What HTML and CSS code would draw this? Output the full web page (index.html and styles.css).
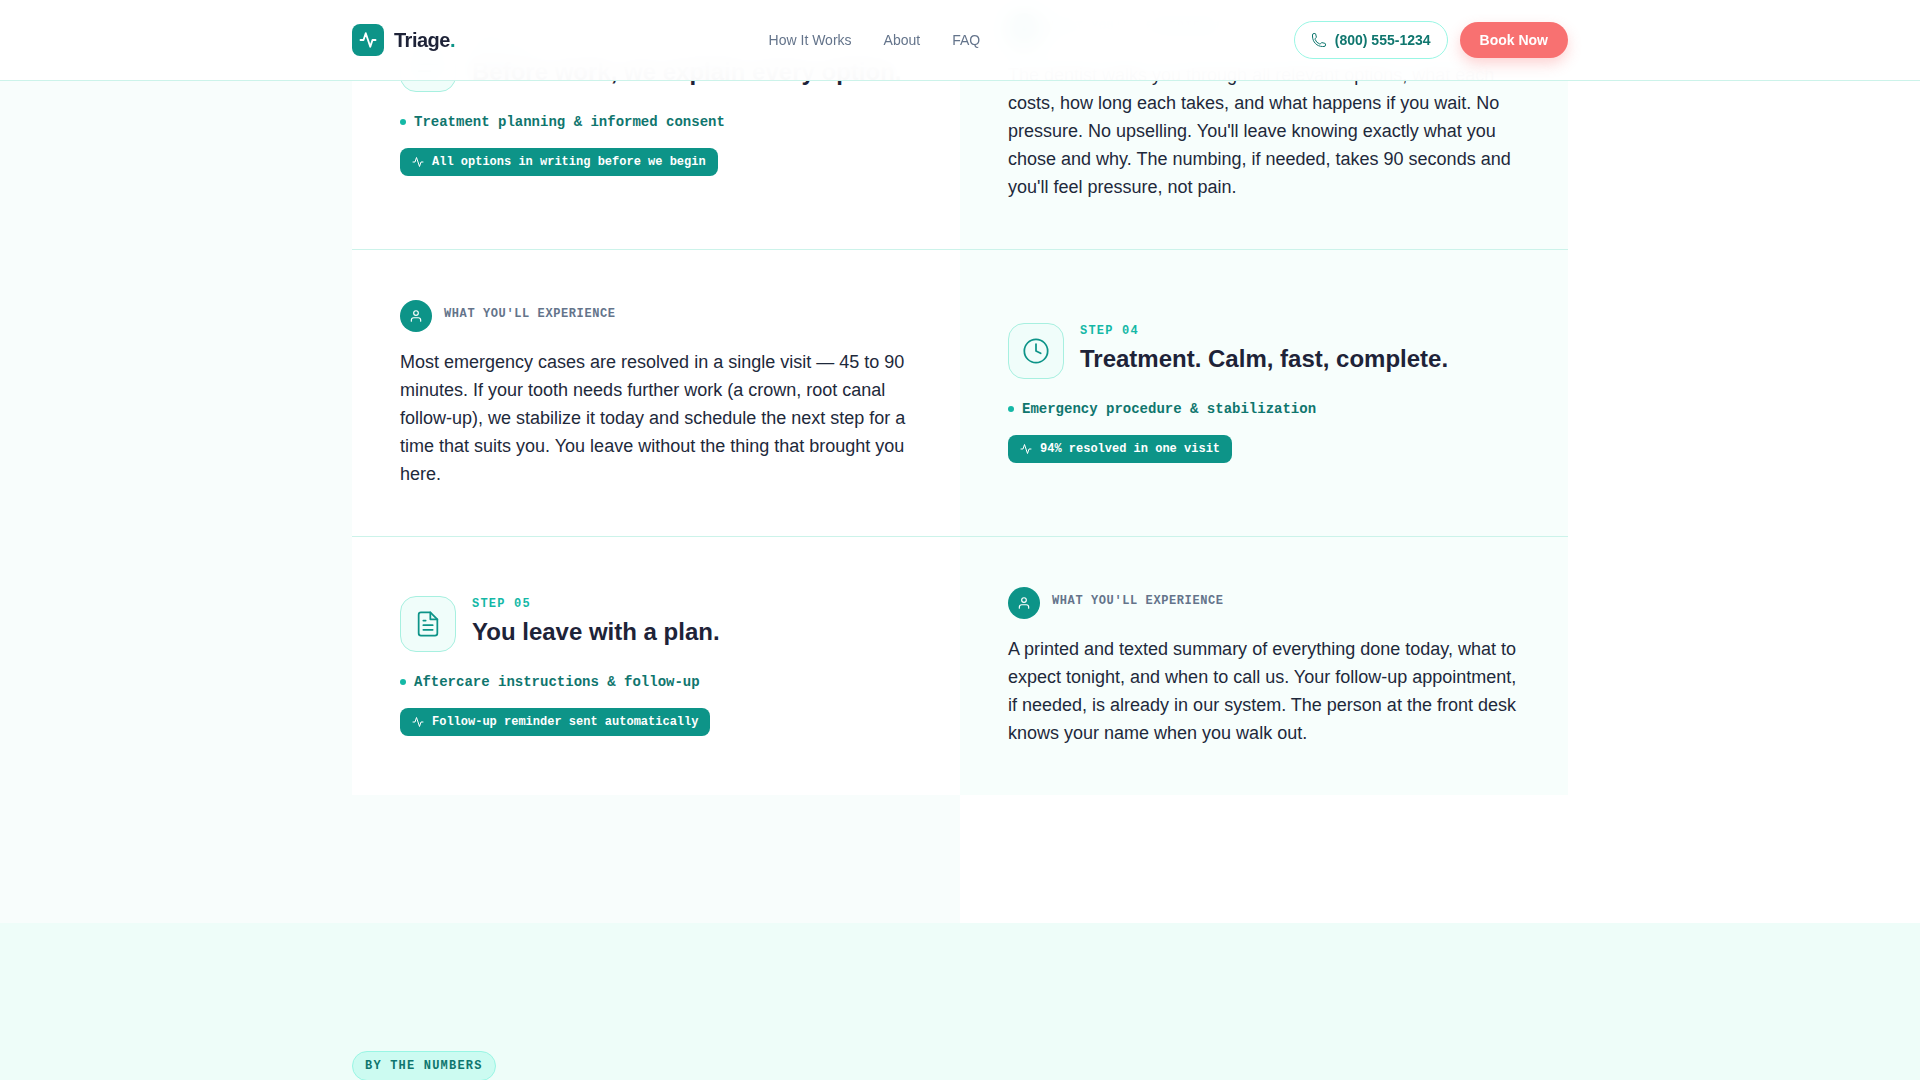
FILE: index.html
```html
<!DOCTYPE html>
<html lang="en">
<head>
  <meta charset="UTF-8">
  <meta name="viewport" content="width=device-width, initial-scale=1">
  <title>Triage</title>
  <link rel="stylesheet" href="styles.css">
</head>
<body>
  <svg class="sprite" aria-hidden="true">
    <symbol id="icon-pulse" viewBox="0 0 24 24"><path d="M2 12h4l3-9 6 18 3-9h4"/></symbol>
    <symbol id="icon-phone" viewBox="0 0 24 24"><path d="M2.25 6.75c0 8.284 6.716 15 15 15h2.25a2.25 2.25 0 0 0 2.25-2.25v-1.372c0-.516-.351-.966-.852-1.091l-4.423-1.106c-.44-.11-.902.055-1.173.417l-.97 1.293c-.282.376-.769.542-1.21.38a12.035 12.035 0 0 1-7.143-7.143c-.162-.441.004-.928.38-1.21l1.293-.97c.363-.271.527-.734.417-1.173L6.963 3.102a1.125 1.125 0 0 0-1.091-.852H4.5A2.25 2.25 0 0 0 2.25 4.5v2.25z"/></symbol>
    <symbol id="icon-user" viewBox="0 0 24 24"><path d="M20 21v-2a4 4 0 0 0-4-4H8a4 4 0 0 0-4 4v2"/><circle cx="12" cy="7" r="4"/></symbol>
    <symbol id="icon-clock" viewBox="0 0 24 24"><circle cx="12" cy="12" r="10"/><path d="M12 6v6l4 2"/></symbol>
    <symbol id="icon-file" viewBox="0 0 24 24"><path d="M14 2H6a2 2 0 0 0-2 2v16a2 2 0 0 0 2 2h12a2 2 0 0 0 2-2V8z"/><path d="M14 2v6h6M16 13H8M16 17H8M10 9H8"/></symbol>
    <symbol id="icon-list" viewBox="0 0 24 24"><path d="M4 6h16M4 12h16M4 18h10"/></symbol>
  </svg>

  <header class="header">
    <div class="container header-inner">
      <a class="logo" href="#">
        <span class="logo-mark"><svg class="icon"><use href="#icon-pulse"/></svg></span>
        <span>Triage<span class="logo-dot">.</span></span>
      </a>
      <nav class="nav">
        <a href="#how">How It Works</a>
        <a href="#about">About</a>
        <a href="#faq">FAQ</a>
      </nav>
      <div class="header-actions">
        <a class="phone" href="tel:8005551234"><svg class="icon"><use href="#icon-phone"/></svg>(800) 555-1234</a>
        <button class="book" type="button">Book Now</button>
      </div>
    </div>
  </header>

  <main>
    <section class="steps" id="how">
      <div class="container">
        <div class="row">
          <div class="cell cell-step">
            <div class="step-head">
              <span class="step-icon"><svg class="icon"><use href="#icon-list"/></svg></span>
              <div>
                <p class="step-number">Step 03</p>
                <h3>Before work, we explain every option.</h3>
              </div>
            </div>
            <p class="clinical">Treatment planning &amp; informed consent</p>
            <p class="chip"><svg class="icon"><use href="#icon-pulse"/></svg>All options in writing before we begin</p>
          </div>
          <div class="cell cell-tint">
            <div class="experience">
              <span class="avatar"><svg class="icon"><use href="#icon-user"/></svg></span>
              <span class="label">What you'll experience</span>
            </div>
            <p class="story">The dentist walks you through all relevant options, what each costs, how long each takes, and what happens if you wait. No pressure. No upselling. You'll leave knowing exactly what you chose and why. The numbing, if needed, takes 90 seconds and you'll feel pressure, not pain.</p>
          </div>
        </div>

        <div class="row">
          <div class="cell">
            <div class="experience">
              <span class="avatar"><svg class="icon"><use href="#icon-user"/></svg></span>
              <span class="label">What you'll experience</span>
            </div>
            <p class="story">Most emergency cases are resolved in a single visit — 45 to 90 minutes. If your tooth needs further work (a crown, root canal follow-up), we stabilize it today and schedule the next step for a time that suits you. You leave without the thing that brought you here.</p>
          </div>
          <div class="cell cell-step cell-tint">
            <div class="step-head">
              <span class="step-icon"><svg class="icon"><use href="#icon-clock"/></svg></span>
              <div>
                <p class="step-number">Step 04</p>
                <h3>Treatment. Calm, fast, complete.</h3>
              </div>
            </div>
            <p class="clinical">Emergency procedure &amp; stabilization</p>
            <p class="chip"><svg class="icon"><use href="#icon-pulse"/></svg>94% resolved in one visit</p>
          </div>
        </div>

        <div class="row">
          <div class="cell cell-step">
            <div class="step-head">
              <span class="step-icon"><svg class="icon"><use href="#icon-file"/></svg></span>
              <div>
                <p class="step-number">Step 05</p>
                <h3>You leave with a plan.</h3>
              </div>
            </div>
            <p class="clinical">Aftercare instructions &amp; follow-up</p>
            <p class="chip"><svg class="icon"><use href="#icon-pulse"/></svg>Follow-up reminder sent automatically</p>
          </div>
          <div class="cell cell-tint">
            <div class="experience">
              <span class="avatar"><svg class="icon"><use href="#icon-user"/></svg></span>
              <span class="label">What you'll experience</span>
            </div>
            <p class="story">A printed and texted summary of everything done today, what to expect tonight, and when to call us. Your follow-up appointment, if needed, is already in our system. The person at the front desk knows your name when you walk out.</p>
          </div>
        </div>
      </div>
    </section>

    <section class="numbers" id="about">
      <div class="container">
        <p class="eyebrow">By the numbers</p>
      </div>
    </section>
  </main>
</body>
</html>
```
FILE: styles.css
```css
* {
  box-sizing: border-box;
}

html,
body {
  height: 100%;
}

body {
  margin: 0;
  overflow: hidden;
  font-family: "Liberation Sans", Arial, sans-serif;
  color: #1e293b;
  background: #fff;
}

h3,
p {
  margin: 0;
}

a {
  color: inherit;
  text-decoration: none;
}

.sprite {
  display: none;
}

.icon {
  display: block;
  flex: none;
  fill: none;
  stroke: currentColor;
  stroke-width: 2;
  stroke-linecap: round;
  stroke-linejoin: round;
}

.container {
  max-width: 1280px;
  margin: 0 auto;
  padding: 0 32px;
}

/* header */
.header {
  position: fixed;
  top: 0;
  left: 0;
  right: 0;
  z-index: 10;
  background: rgba(255, 255, 255, 0.96);
  border-bottom: 1px solid #ccf3ea;
  backdrop-filter: blur(12px);
}

.header-inner {
  display: flex;
  align-items: center;
  justify-content: space-between;
  height: 80px;
}

.logo {
  display: flex;
  align-items: center;
  gap: 10px;
  font-size: 20px;
  font-weight: bold;
  letter-spacing: -0.025em;
  color: #1e2338;
}

.logo-mark {
  display: flex;
  align-items: center;
  justify-content: center;
  width: 32px;
  height: 32px;
  border-radius: 8px;
  background: #0d9488;
  color: #fff;
}

.logo-mark .icon {
  width: 18px;
  height: 18px;
  stroke-width: 2.5;
}

.logo-dot {
  color: #0d9488;
}

.nav {
  display: flex;
  gap: 32px;
  font-size: 14px;
  color: #64748b;
}

.header-actions {
  display: flex;
  align-items: center;
  gap: 12px;
  font-size: 14px;
  font-weight: bold;
}

.phone {
  display: flex;
  align-items: center;
  gap: 8px;
  height: 38px;
  padding: 0 16px;
  border: 1px solid #99f6e4;
  border-radius: 20px;
  color: #0f766e;
}

.phone .icon {
  width: 16px;
  height: 16px;
  stroke-width: 1.5;
}

.book {
  height: 36px;
  padding: 0 20px;
  border: 0;
  border-radius: 18px;
  font: inherit;
  color: #fff;
  background: #f87171;
  box-shadow: 0 6px 14px rgba(248, 113, 113, 0.3);
  cursor: pointer;
}

/* steps */
.steps {
  margin-top: -37px;
  padding-bottom: 128px;
  background: linear-gradient(90deg, #f8fdfc 50%, #fff 50%);
}

.row {
  display: grid;
  grid-template-columns: 1fr 1fr;
  border-bottom: 1px solid #ccf3ea;
}

.row:last-child {
  border-bottom: 0;
}

.cell {
  display: flex;
  flex-direction: column;
  justify-content: center;
  align-items: flex-start;
  padding: 50px 48px 48px;
  background: #fff;
}

.cell-step {
  padding: 48px;
}

.cell-tint {
  background: #f7fefc;
}

.step-head {
  display: flex;
  align-items: flex-start;
  gap: 16px;
}

.step-icon {
  display: flex;
  align-items: center;
  justify-content: center;
  width: 56px;
  height: 56px;
  border: 1px solid #a7f0e0;
  border-radius: 16px;
  background: #f0fdfa;
  color: #0d9488;
}

.step-icon .icon {
  width: 28px;
  height: 28px;
  stroke-width: 1.5;
}

.step-number,
.label,
.clinical,
.chip,
.eyebrow {
  font-family: "Liberation Mono", monospace;
  font-weight: bold;
}

.step-number {
  font-size: 12px;
  line-height: 16px;
  letter-spacing: 0.1em;
  text-transform: uppercase;
  color: #14b8a6;
}

h3 {
  margin-top: 4px;
  font-size: 24px;
  line-height: 32px;
  color: #1e2338;
}

.clinical {
  display: flex;
  align-items: center;
  gap: 8px;
  margin-top: 20px;
  font-size: 14px;
  line-height: 20px;
  color: #0f766e;
}

.clinical::before {
  content: "";
  width: 6px;
  height: 6px;
  border-radius: 50%;
  background: #14b8a6;
}

.chip {
  display: flex;
  align-items: center;
  gap: 8px;
  margin-top: 16px;
  padding: 6px 12px;
  border-radius: 8px;
  font-size: 12px;
  line-height: 16px;
  color: #fff;
  background: #0d9488;
}

.chip .icon {
  width: 12px;
  height: 12px;
}

.experience {
  display: flex;
  gap: 12px;
  margin-bottom: 16px;
}

.avatar {
  display: flex;
  align-items: center;
  justify-content: center;
  width: 32px;
  height: 32px;
  border-radius: 50%;
  background: #0d9488;
  color: #fff;
}

.avatar .icon {
  width: 14px;
  height: 14px;
}

.label {
  padding-top: 4px;
  font-size: 12px;
  line-height: 20px;
  letter-spacing: 0.05em;
  text-transform: uppercase;
  color: #64748b;
}

.story {
  font-size: 18px;
  line-height: 28px;
}

/* numbers */
.numbers {
  min-height: 400px;
  padding-top: 128px;
  background: #eefdf9;
}

.eyebrow {
  width: fit-content;
  padding: 6px 12px;
  border: 1px solid #99f6e4;
  border-radius: 16px;
  font-size: 12px;
  line-height: 16px;
  letter-spacing: 0.1em;
  text-transform: uppercase;
  color: #0f766e;
  background: #ccfbf1;
}
```
